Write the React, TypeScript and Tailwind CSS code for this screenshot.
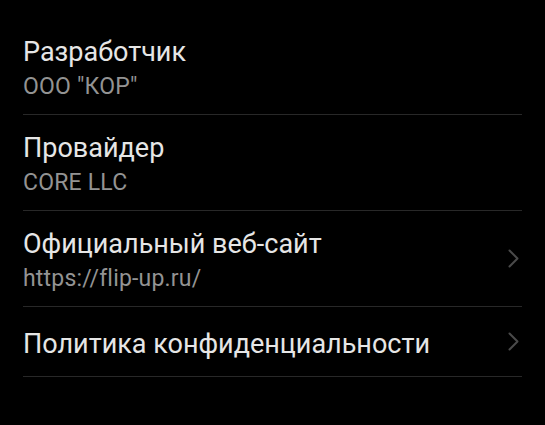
const ROWS: { title: string; value?: string; link?: boolean }[] = [
  { title: 'Разработчик', value: 'ООО "КОР"' },
  { title: 'Провайдер', value: 'CORE LLC' },
  { title: 'Официальный веб-сайт', value: 'https://flip-up.ru/', link: true },
  { title: 'Политика конфиденциальности', link: true },
]

function Chevron() {
  return (
    <svg width="11" height="19" viewBox="0 0 11 19" fill="none" className="shrink-0">
      <polyline points="1.5,1.5 9.5,9.5 1.5,17.5" stroke="#4a4a4a" strokeWidth="2" strokeLinecap="round" strokeLinejoin="round" />
    </svg>
  )
}

export default function App() {
  return (
    <div className="w-full h-[425px] bg-black pt-[19px] px-[23px] font-['Roboto','Noto_Sans',sans-serif] antialiased">
      {ROWS.map((r) => (
        <div
          key={r.title}
          className={`flex items-center justify-between border-b border-[#282828] pr-[3px] ${r.value ? 'h-[96px]' : 'h-[70px]'}`}
        >
          <div className="flex flex-col pt-[4px]">
            <span className="text-[27px] leading-[32px] text-[#e6e6e6]">{r.title}</span>
            {r.value && (
              <span className="mt-[5px] text-[23px] leading-[28px] tracking-[0.2px] text-[#939393]">{r.value}</span>
            )}
          </div>
          {r.link && <Chevron />}
        </div>
      ))}
    </div>
  )
}
